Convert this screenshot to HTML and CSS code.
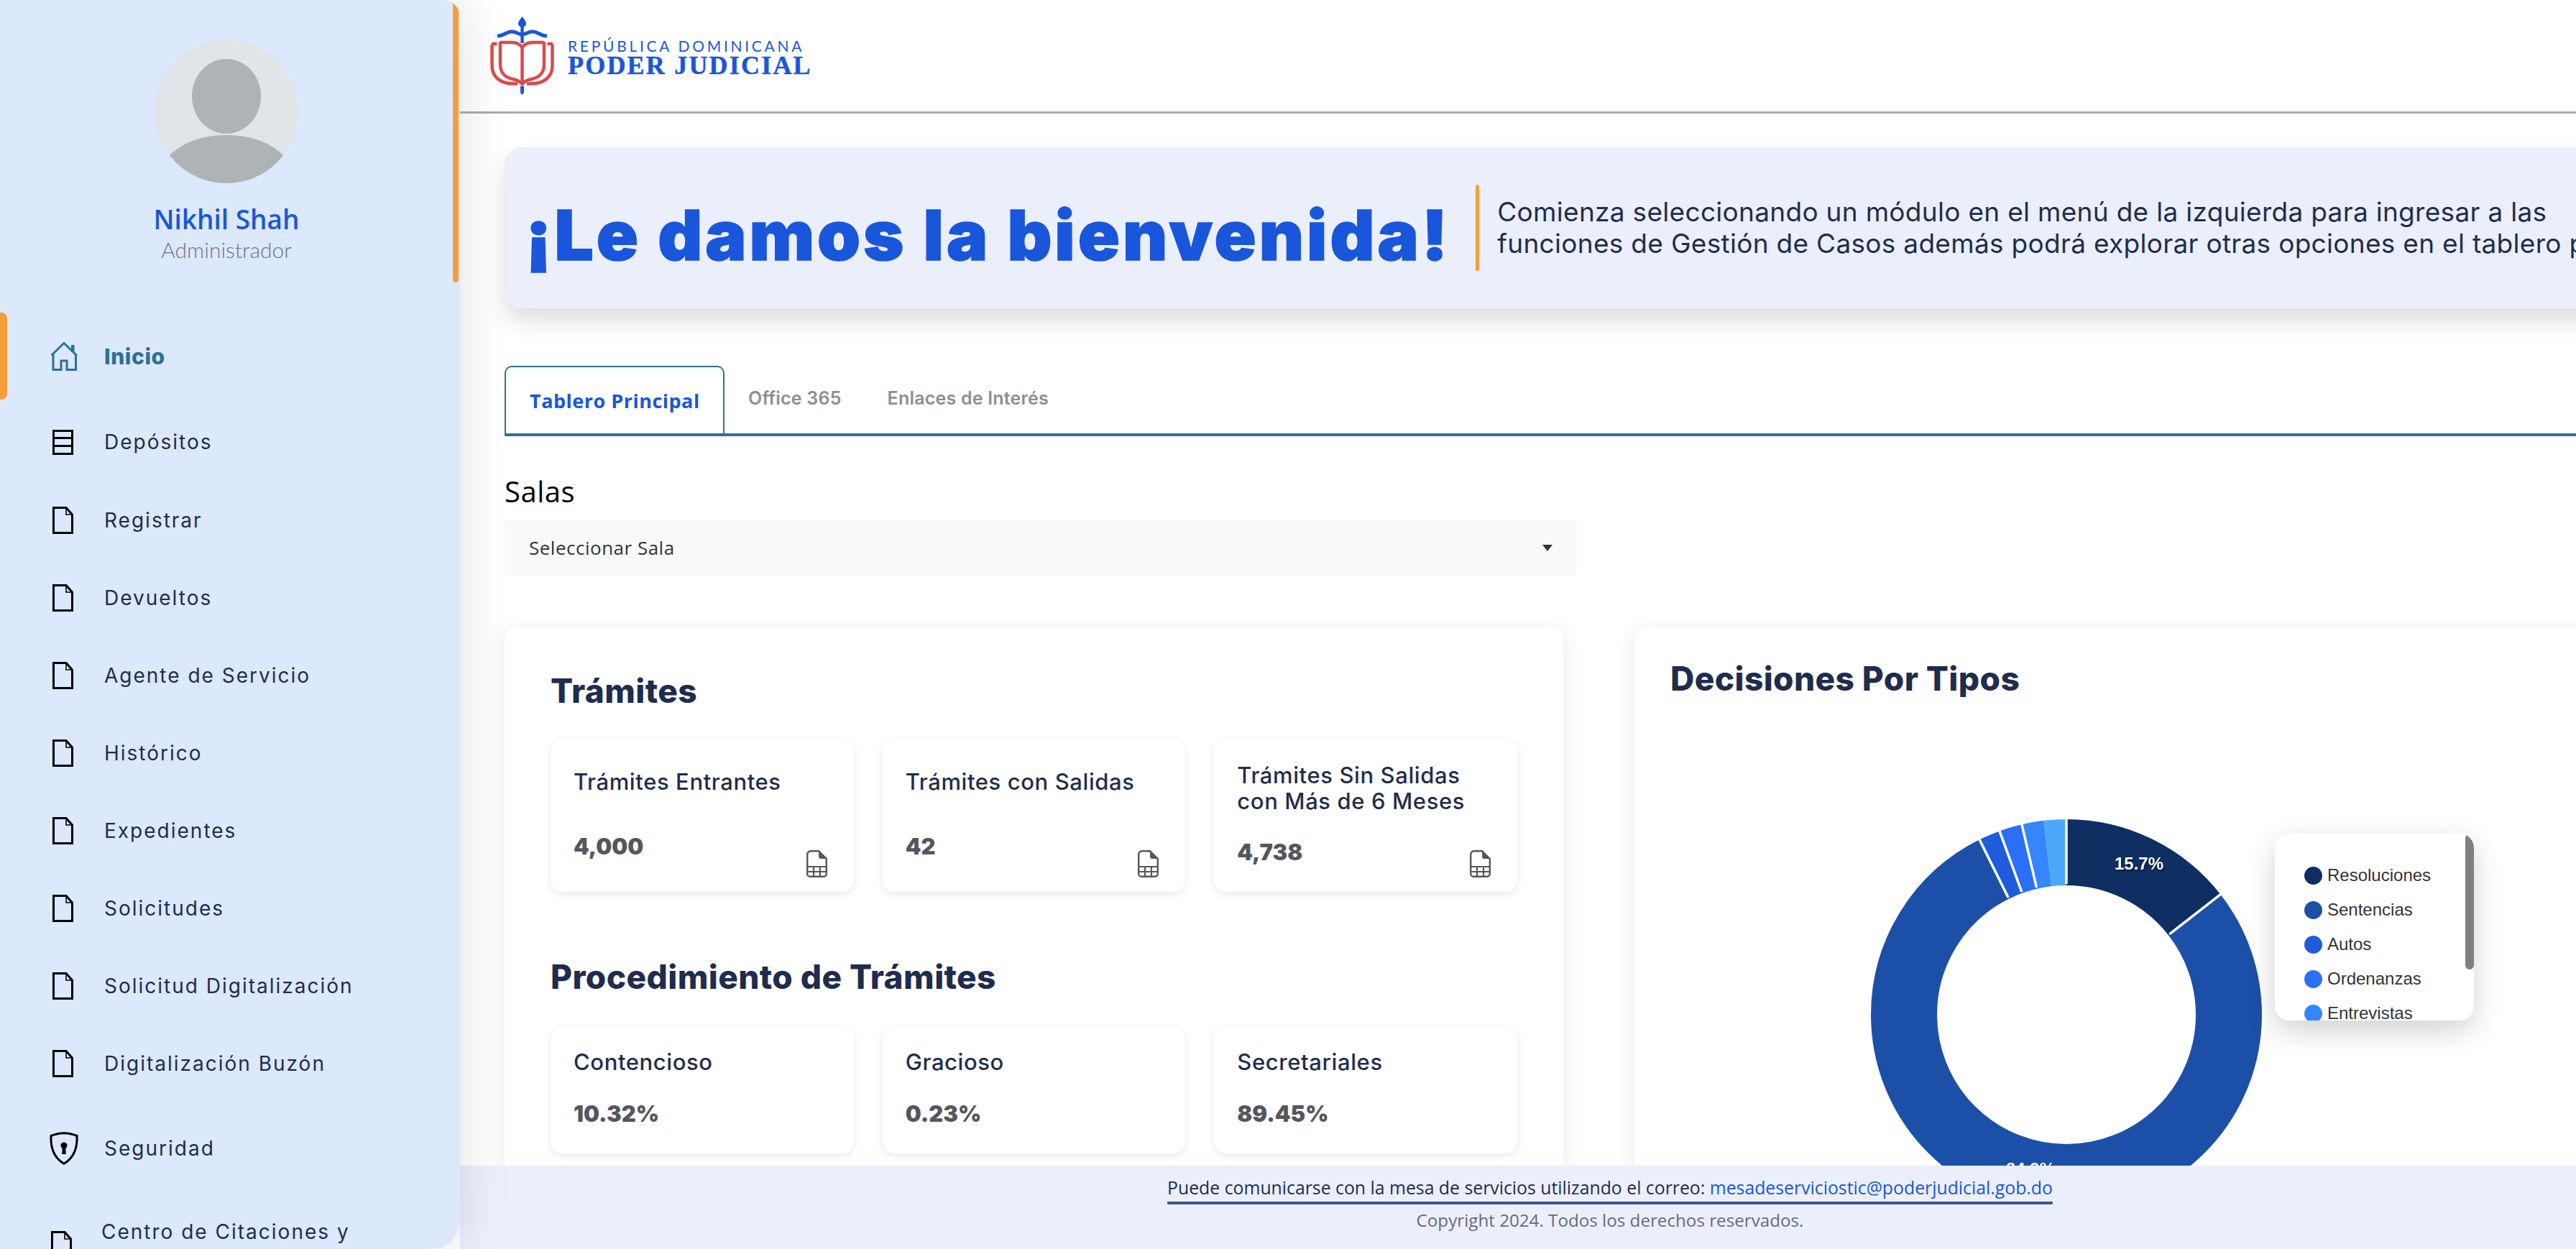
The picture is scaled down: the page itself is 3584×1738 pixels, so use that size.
FILE: index.html
```html
<!DOCTYPE html>
<html lang="es">
<head>
<meta charset="utf-8">
<title>Poder Judicial</title>
<link rel="stylesheet" href="styles.css">
</head>
<body>
<svg class="defs" width="0" height="0" aria-hidden="true">
  <symbol id="i-doc" viewBox="0 0 29 38"><path d="M1.500 1.500H19L27.500 11V36.500H1.500Z" fill="none" stroke="#000" stroke-width="3"/><path d="M19 1.500V11H27.500" fill="none" stroke="#000" stroke-width="1.600"/></symbol>
  <symbol id="i-file" viewBox="0 0 29 38"><path d="M6 1.200H17L27.800 12V33A3.800 3.800 0 0 1 24 36.800H5A3.800 3.800 0 0 1 1.200 33V6A4.800 4.800 0 0 1 6 1.200Z" fill="none" stroke="#55565e" stroke-width="2.400"/><path d="M17 1.200V8.500A3.500 3.500 0 0 0 20.500 12H27.800Z" fill="#55565e"/><path d="M1.500 23H27.500M1.500 30H27.500M10 23V36.500M19 23V36.500" fill="none" stroke="#55565e" stroke-width="2.200"/></symbol>
</svg>
<div class="app">
  <aside class="sidebar">
    <div class="side-thumb"></div>
    <div class="profile">
      <svg class="avatar" viewBox="0 0 200 200"><defs><clipPath id="av"><circle cx="100" cy="100" r="100"/></clipPath></defs><circle cx="100" cy="100" r="100" fill="#e2e5e8"/><ellipse cx="100" cy="79" rx="48" ry="52" fill="#aeb3b5"/><path clip-path="url(#av)" d="M20 162C40 142 68 133 100 133S160 142 180 162V200H20Z" fill="#aeb3b5"/></svg>
      <div class="name">Nikhil Shah</div>
      <div class="role">Administrador</div>
    </div>
    <nav class="nav">
      <a class="nav-item active">
        <svg class="ico ico-home" viewBox="0 0 38 40"><path d="M1.500 18.500 19 1.500 36.500 18.500M4 16V38.500H15V26H23V38.500H35.500V16" fill="none" stroke="#2d7096" stroke-width="3"/><path d="M29 4H33.500V14H29Z" fill="#2d7096"/></svg>
        <span>Inicio</span>
      </a>
      <a class="nav-item first">
        <svg class="ico ico-box" viewBox="0 0 29 35"><path d="M1.500 1.500H27.500V33.500H1.500ZM1.500 11.500H27.500M1.500 22.500H27.500" fill="none" stroke="#000" stroke-width="3"/></svg>
        <span>Depósitos</span>
      </a>
      <a class="nav-item"><svg class="ico ico-doc"><use href="#i-doc"/></svg><span>Registrar</span></a>
      <a class="nav-item"><svg class="ico ico-doc"><use href="#i-doc"/></svg><span>Devueltos</span></a>
      <a class="nav-item"><svg class="ico ico-doc"><use href="#i-doc"/></svg><span>Agente de Servicio</span></a>
      <a class="nav-item"><svg class="ico ico-doc"><use href="#i-doc"/></svg><span>Histórico</span></a>
      <a class="nav-item"><svg class="ico ico-doc"><use href="#i-doc"/></svg><span>Expedientes</span></a>
      <a class="nav-item"><svg class="ico ico-doc"><use href="#i-doc"/></svg><span>Solicitudes</span></a>
      <a class="nav-item"><svg class="ico ico-doc"><use href="#i-doc"/></svg><span>Solicitud Digitalización</span></a>
      <a class="nav-item"><svg class="ico ico-doc"><use href="#i-doc"/></svg><span>Digitalización Buzón</span></a>
      <a class="nav-item secure">
        <svg class="ico ico-shield" viewBox="0 0 40 46"><path d="M20 1.700C26 1.700 32 3 38 5.500C38.800 22 34 36 20 44.300C6 36 1.200 22 2 5.500C8 3 14 1.700 20 1.700Z" fill="none" stroke="#000" stroke-width="3"/><circle cx="20" cy="19" r="4.500" fill="#000"/><path d="M18 20H22L22.800 31H17.200Z" fill="#000"/></svg>
        <span>Seguridad</span>
      </a>
      <a class="nav-item tall">
        <svg class="ico ico-doc"><use href="#i-doc"/></svg>
        <span>Centro de Citaciones y<br>Notificaciones</span>
      </a>
    </nav>
  </aside>
  <main class="main">
    <div class="main-inner">
      <header class="topbar">
        <div class="logo">
          <svg class="logo-mark" viewBox="0 0 89 109">
            <g fill="none" stroke="#dc4a4a" stroke-width="4.500">
              <path d="M2.500 39V68C2.500 85 15 93.500 33 93.500H38"/>
              <path d="M86.500 39V68C86.500 85 74 93.500 56 93.500H51"/>
              <path d="M2 38H9.500M79.500 38H87"/>
              <path d="M14 36H30C36 36 41 38 44.500 43C48 38 53 36 59 36H75"/>
              <path d="M14 35V67C14 79 22 85 31 87C37 88 41 90 44.500 94C48 90 52 88 58 87C67 85 75 79 75 67V35"/>
              <path d="M44.500 43V94"/>
            </g>
            <g fill="#1a56db">
              <path d="M44.500 0C47 3 50 7 50 10C50 13 47 14 46.500 15H42.500C42 14 39 13 39 10C39 7 42 3 44.500 0Z"/>
              <rect x="42.300" y="14" width="4.400" height="23"/>
              <path d="M42 97H47V106L44.500 109L42 106Z"/>
            </g>
            <path d="M10 27C20 27 22 21 30 21C36 21 40 25 44.500 25C49 25 53 21 59 21C67 21 69 27 79 27" fill="none" stroke="#1a56db" stroke-width="5"/>
          </svg>
          <div class="logo-text">
            <div class="logo-top">REPÚBLICA DOMINICANA</div>
            <div class="logo-bottom">PODER JUDICIAL</div>
          </div>
        </div>
      </header>
      <div class="content">
        <section class="hero">
          <h1 class="hero-title">¡Le damos la bienvenida!</h1>
          <div class="hero-rule"></div>
          <p class="hero-text">Comienza seleccionando un módulo en el menú de la izquierda para ingresar a las<br>funciones de Gestión de Casos además podrá explorar otras opciones en el tablero principal.</p>
        </section>
        <div class="tabs">
          <div class="tab on">Tablero Principal</div>
          <div class="tab">Office 365</div>
          <div class="tab">Enlaces de Interés</div>
        </div>
        <div class="salas">Salas</div>
        <div class="select"><span>Seleccionar Sala</span><i class="caret"></i></div>
        <div class="columns">
          <section class="card card-left">
            <h2 class="heading">Trámites</h2>
            <div class="stats">
              <div class="stat"><div class="stat-title">Trámites Entrantes</div><div class="stat-value">4,000</div><svg class="stat-ico"><use href="#i-file"/></svg></div>
              <div class="stat"><div class="stat-title">Trámites con Salidas</div><div class="stat-value">42</div><svg class="stat-ico"><use href="#i-file"/></svg></div>
              <div class="stat stat-tall"><div class="stat-title">Trámites Sin Salidas<br>con Más de 6 Meses</div><div class="stat-value">4,738</div><svg class="stat-ico"><use href="#i-file"/></svg></div>
            </div>
            <h2 class="heading heading-2">Procedimiento de Trámites</h2>
            <div class="stats">
              <div class="stat stat-short"><div class="stat-title">Contencioso</div><div class="stat-value">10.32%</div></div>
              <div class="stat stat-short"><div class="stat-title">Gracioso</div><div class="stat-value">0.23%</div></div>
              <div class="stat stat-short"><div class="stat-title">Secretariales</div><div class="stat-value">89.45%</div></div>
            </div>
          </section>
          <section class="card card-right">
            <h2 class="heading heading-chart">Decisiones Por Tipos</h2>
            <svg class="donut" viewBox="0 0 544 544">
              <g fill="none" stroke-width="92" transform="rotate(-90 272 272)">
                <circle cx="272" cy="272" r="226" pathLength="360" stroke="#0f2f63" stroke-dasharray="52 308"/>
                <circle cx="272" cy="272" r="226" pathLength="360" stroke="#1c50a8" stroke-dasharray="281.600 78.400" stroke-dashoffset="-52"/>
                <circle cx="272" cy="272" r="226" pathLength="360" stroke="#1f5cdc" stroke-dasharray="6.400 353.600" stroke-dashoffset="-333.600"/>
                <circle cx="272" cy="272" r="226" pathLength="360" stroke="#2a6ff5" stroke-dasharray="6.800 353.200" stroke-dashoffset="-340"/>
                <circle cx="272" cy="272" r="226" pathLength="360" stroke="#3585fb" stroke-dasharray="6.500 353.500" stroke-dashoffset="-346.800"/>
                <circle cx="272" cy="272" r="226" pathLength="360" stroke="#4da8fb" stroke-dasharray="6.700 353.300" stroke-dashoffset="-353.300"/>
              </g>
              <g stroke="#fff" stroke-width="3.500">
                <path d="M272 90V-4"/>
                <path d="M272 90V-4" transform="rotate(52 272 272)"/>
                <path d="M272 90V-4" transform="rotate(333.600 272 272)"/>
                <path d="M272 90V-4" transform="rotate(340 272 272)"/>
                <path d="M272 90V-4" transform="rotate(346.800 272 272)"/>
              </g>
              <text class="donut-label" x="373" y="70" text-anchor="middle">15.7%</text>
              <text class="donut-label" x="222" y="495" text-anchor="middle">84.3%</text>
            </svg>
            <div class="legend">
              <div class="legend-thumb"></div>
              <ul class="legend-list">
                <li><i class="dot d1"></i>Resoluciones</li>
                <li><i class="dot d2"></i>Sentencias</li>
                <li><i class="dot d3"></i>Autos</li>
                <li><i class="dot d4"></i>Ordenanzas</li>
                <li><i class="dot d5"></i>Entrevistas</li>
              </ul>
            </div>
          </section>
        </div>
      </div>
      <footer class="footer">
        <div class="foot-line">Puede comunicarse con la mesa de servicios utilizando el correo: <a class="foot-link">mesadeserviciostic@poderjudicial.gob.do</a></div>
        <div class="foot-copy">Copyright 2024. Todos los derechos reservados.</div>
      </footer>
    </div>
  </main>
</div>
</body>
</html>
```
FILE: styles.css
```css
* { box-sizing: border-box; }
html, body { margin: 0; height: 100%; overflow: hidden; background: #fff; }
body { font-family: "Inter", "Noto Sans", sans-serif; color: #1f2d4d; }
.defs { position: absolute; }
.app { display: flex; height: 1738px; width: 3584px; overflow: hidden; }

/* Sidebar */
.sidebar { position: relative; z-index: 2; flex: 0 0 640px; height: 1738px; background: #dce8fc; border-radius: 0 24px 40px 0; box-shadow: 0 0 70px rgba(0,0,0,.13); overflow: hidden; }
.side-thumb { position: absolute; top: 0; right: 2px; width: 8px; height: 393px; background: #f59e3b; border-radius: 4px; }
.profile { display: flex; flex-direction: column; align-items: center; padding: 55px 10px 0 0; }
.avatar { width: 200px; height: 200px; display: block; }
.name { font-family: "Open Sans", sans-serif; font-size: 37px; font-weight: 600; line-height: 48px; color: #1a56db; margin-top: 26px; }
.role { font-family: "Lato", sans-serif; font-size: 30px; font-weight: 300; line-height: 36px; color: #6f7480; }
.nav { padding-top: 70px; display: flex; flex-direction: column; }
.nav-item { display: flex; align-items: center; height: 108px; padding-left: 73px; font-size: 28px; letter-spacing: 2px; color: #1f2d4d; position: relative; }
.nav-item span { position: absolute; left: 145px; }
.nav-item.active { height: 121px; color: #2d7096; font-weight: 800; font-size: 30px; letter-spacing: .6px; }
.nav-item.active::before { content: ""; position: absolute; left: 0; top: 0; bottom: 0; width: 10px; background: #f59e3b; border-radius: 0 8px 8px 0; }
.nav-item.first { height: 114px; padding-top: 4px; }
.nav-item.secure { height: 128px; }
.nav-item.tall { height: 140px; line-height: 36px; }
.nav-item.tall span { left: 141px; }
.ico { display: block; flex: none; }
.ico-home { width: 38px; height: 40px; margin-left: -3px; }
.ico-box { width: 29px; height: 35px; }
.ico-doc { width: 29px; height: 38px; }
.ico-shield { width: 40px; height: 46px; margin-left: -4px; }
.nav-item.tall .ico-doc { margin-left: -2px; }

/* Main */
.main { flex: 1 1 0; min-width: 0; height: 1738px; overflow: hidden; position: relative; }
.main-inner { width: 3200px; height: 100%; display: flex; flex-direction: column; }
.topbar { flex: none; height: 158px; border-bottom: 3px solid #aaaaaa; padding: 23px 0 0 42px; background: #fff; }
.logo { display: flex; align-items: flex-start; }
.logo-mark { width: 89px; height: 109px; display: block; }
.logo-text { margin-left: 19px; padding-top: 29px; }
.logo-top { font-family: "Lato", sans-serif; font-size: 21px; font-weight: 400; line-height: 24px; letter-spacing: 3.700px; color: #1a56db; white-space: nowrap; }
.logo-bottom { font-family: "Liberation Serif", serif; font-size: 36px; font-weight: 700; line-height: 30px; letter-spacing: 2.200px; color: #1a56db; white-space: nowrap; -webkit-text-stroke: .5px #1a56db; }
.content { flex: 1 1 0; min-height: 0; overflow: hidden; padding: 47px 62px 0; }

.hero { display: flex; align-items: center; height: 224px; padding-left: 29px; background: #ebeffb; border-radius: 24px 0 0 24px; box-shadow: 0 18px 32px rgba(0,0,0,.13); }
.hero-title { margin: 0; padding-top: 20px; font-size: 96px; font-weight: 900; line-height: 116px; letter-spacing: 4px; color: #1a56db; white-space: nowrap; -webkit-text-stroke: 1.500px #1a56db; }
.hero-rule { flex: none; width: 5px; height: 120px; margin: 0 25px 0 35px; background: #f59e3b; border-radius: 3px; }
.hero-text { margin: 0; font-size: 37px; line-height: 44px; letter-spacing: .3px; color: #1f2d4d; white-space: nowrap; }

.tabs { display: flex; align-items: stretch; height: 98px; margin-top: 80px; border-bottom: 4px solid #2d7096; }
.tab { display: flex; align-items: center; padding: 0 32px 4px; font-size: 25px; font-weight: 600; letter-spacing: .2px; color: #8e8e93; white-space: nowrap; }
.tab.on { padding: 0 33px; width: 306px; margin-right: 1px; border: 2px solid #2d7096; border-bottom: 0; border-radius: 10px 10px 0 0; color: #1a56db; font-family: "Open Sans", sans-serif; font-size: 27px; font-weight: 700; letter-spacing: .5px; }

.salas { margin-top: 52px; font-family: "Open Sans", sans-serif; font-size: 40px; line-height: 50px; letter-spacing: .5px; color: #000; }
.select { display: flex; align-items: center; justify-content: space-between; width: 1492px; height: 78px; margin-top: 14px; padding: 0 34px; background: #fafafa; border-radius: 8px; font-family: "Open Sans", sans-serif; font-size: 26px; letter-spacing: .5px; color: #333; }
.caret { width: 0; height: 0; border-top: 9px solid #333; border-left: 7.500px solid transparent; border-right: 7.500px solid transparent; }

.columns { display: flex; gap: 99px; margin-top: 72px; align-items: flex-start; }
.card { position: relative; background: #fff; border-radius: 16px; box-shadow: 0 4px 30px rgba(0,0,0,.09); height: 1000px; }
.card-left { flex: 0 0 1473px; padding: 64px 64px 0; }
.card-right { flex: 0 0 1504px; padding: 47px 50px 0; }
.heading { margin: 0; font-size: 46px; font-weight: 800; line-height: 48px; color: #1f2d4d; letter-spacing: .4px; }
.heading-2 { margin-top: 94px; }
.stats { display: grid; grid-template-columns: repeat(3, 1fr); gap: 40px; margin-top: 44px; }
.heading-2 + .stats { margin-top: 46px; }
.stat { position: relative; height: 212px; padding: 41px 32px 0; background: #fff; border-radius: 16px; box-shadow: 0 3px 12px rgba(0,0,0,.09); }
.stat-title { font-size: 31px; font-weight: 500; line-height: 36px; letter-spacing: .6px; color: #1f2d4d; margin-bottom: 54px; }
.stat-value { font-size: 31px; font-weight: 900; line-height: 36px; color: #55565e; }
.stat-tall { padding-top: 32px; }
.stat-tall .stat-title { margin-bottom: 35px; }
.stat-short { height: 176px; padding-top: 31px; }
.stat-short .stat-title { margin-bottom: 36px; }
.stat-ico { position: absolute; right: 37px; bottom: 20px; width: 29px; height: 38px; }

.donut { display: block; width: 544px; height: 544px; margin: 172px 0 0 279px; overflow: visible; }
.donut-label { font-family: "Liberation Sans", sans-serif; font-size: 24px; font-weight: 700; fill: #fff; filter: drop-shadow(1px 2px 1px rgba(0,0,0,.45)); }
.legend { position: absolute; left: 891px; top: 287px; width: 277px; height: 260px; background: #fff; border-radius: 20px; box-shadow: 0 14px 40px rgba(0,0,0,.18); overflow: hidden; }
.legend-thumb { position: absolute; top: 0; right: 0; width: 12px; height: 189px; background: #808080; border-radius: 6px; }
.legend-list { list-style: none; margin: 0; padding: 34px 0 0 41px; font-family: "Liberation Sans", sans-serif; font-size: 24px; color: #333; }
.legend-list li { display: flex; align-items: center; height: 48px; white-space: nowrap; }
.dot { flex: none; width: 25px; height: 25px; border-radius: 50%; margin-right: 7px; }
.d1 { background: #0f2f63; } .d2 { background: #1c50a8; } .d3 { background: #1f5cdc; } .d4 { background: #2a6ff5; } .d5 { background: #3585fb; }

/* Footer */
.footer { flex: none; position: relative; height: 116px; background: #ebeffb; display: flex; flex-direction: column; align-items: center; padding-top: 12px; font-family: "Open Sans", sans-serif; }
.foot-line { font-size: 24.800px; line-height: 36px; color: #1f2d4d; padding-bottom: 2px; border-bottom: 4px solid #3a5590; border-radius: 2px; white-space: nowrap; }
.foot-link { color: #1a56db; }
.foot-copy { margin-top: 6px; font-size: 24.200px; line-height: 32px; color: #666c78; }
```
